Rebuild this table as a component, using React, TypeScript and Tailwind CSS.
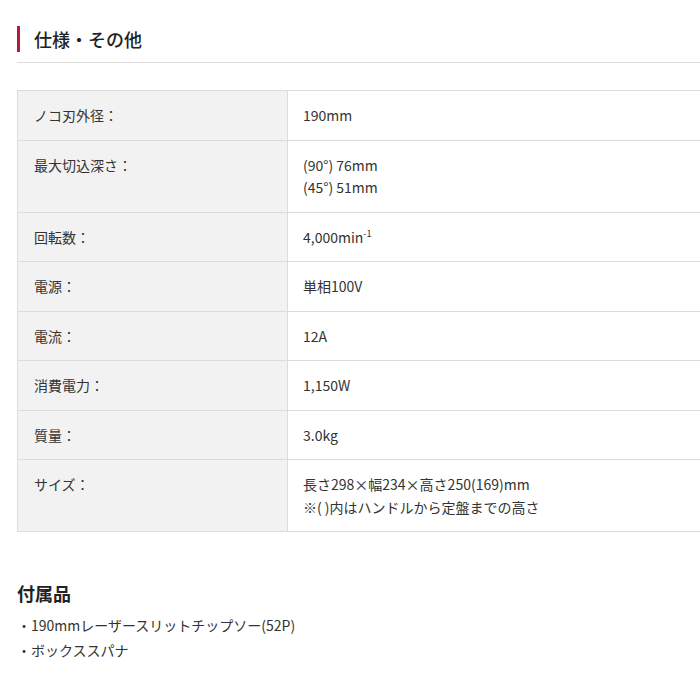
const specs: { label: string; value: React.ReactNode }[] = [
  { label: "ノコ刃外径：", value: "190mm" },
  {
    label: "最大切込深さ：",
    value: (
      <>
        (90°) 76mm
        <br />
        (45°) 51mm
      </>
    ),
  },
  {
    label: "回転数：",
    value: (
      <>
        4,000min<sup className="text-[9px] relative -top-[6px]">-1</sup>
      </>
    ),
  },
  { label: "電源：", value: "単相100V" },
  { label: "電流：", value: "12A" },
  { label: "消費電力：", value: "1,150W" },
  { label: "質量：", value: "3.0kg" },
  {
    label: "サイズ：",
    value: (
      <>
        長さ298×幅234×高さ250(169)mm
        <br />
        ※( )内はハンドルから定盤までの高さ
      </>
    ),
  },
];

const accessories = ["190mmレーザースリットチップソー(52P)", "ボックススパナ"];

export default function App() {
  return (
    <div
      className="w-[700px] h-[700px] overflow-hidden bg-white text-[#333] pl-[17px]"
      style={{ fontFamily: '"Noto Sans CJK JP", "Noto Sans", sans-serif' }}
    >
      {/* section heading */}
      <div className="pt-[26px] border-b border-[#dcdcdc] pb-[10px]">
        <div className="flex items-center h-[26px] border-l-[3px] border-[#b8173f] pl-[14px]">
          <h2 className="text-[18px] font-medium leading-none text-[#222]">仕様・その他</h2>
        </div>
      </div>

      {/* spec table */}
      <table className="mt-[27px] w-full border-collapse text-[14px] leading-[22.5px]">
        <tbody>
          {specs.map((s) => (
            <tr key={s.label} className="border-y border-[#dcdcdc]">
              <th className="w-[270px] bg-[#f2f2f2] border-l border-r border-[#dcdcdc] text-left font-normal align-top px-[16px] py-[13px]">
                {s.label}
              </th>
              <td className="align-top px-[15px] py-[13px]">{s.value}</td>
            </tr>
          ))}
        </tbody>
      </table>

      {/* accessories */}
      <h3 className="mt-[47px] text-[18px] font-bold leading-[28px] text-[#222]">付属品</h3>
      <ul className="mt-[6px] text-[14px] leading-[25px]">
        {accessories.map((a) => (
          <li key={a}>・{a}</li>
        ))}
      </ul>
    </div>
  );
}
